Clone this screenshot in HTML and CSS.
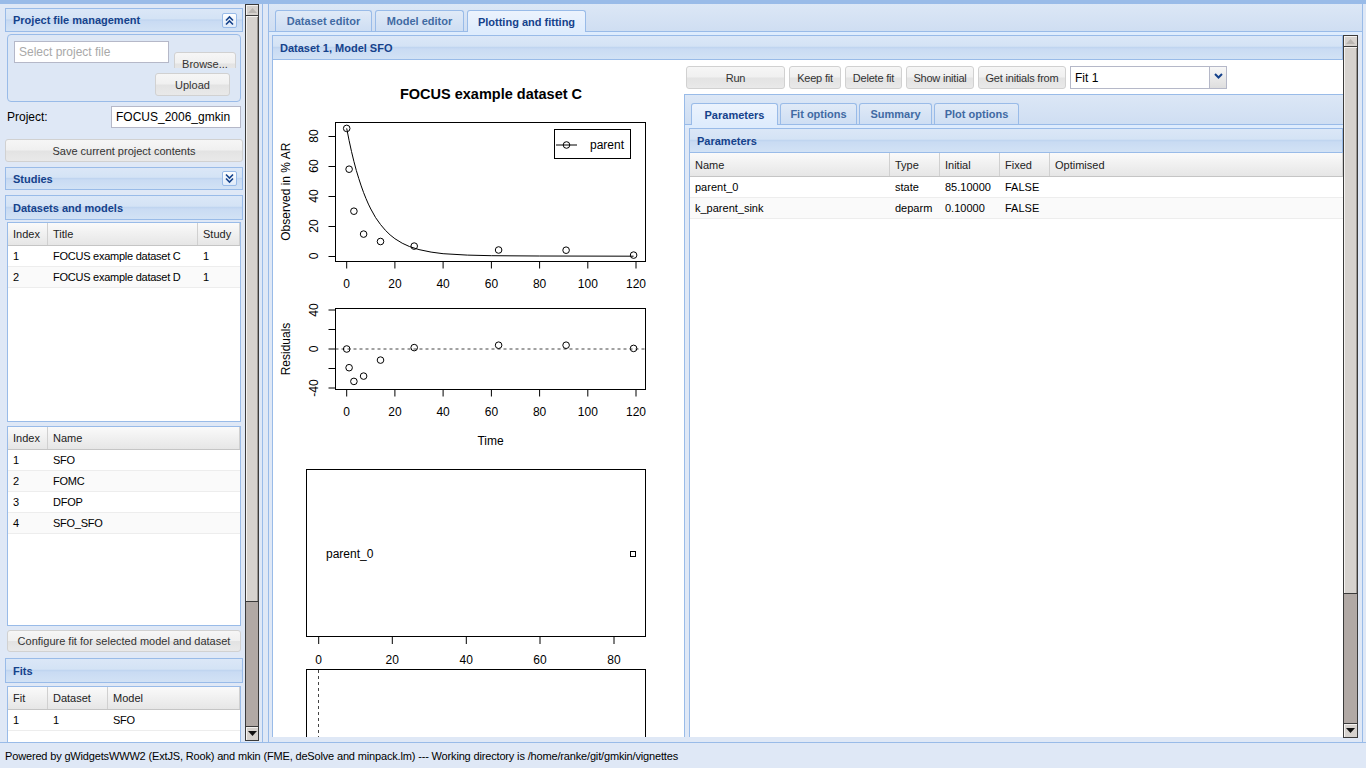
FILE: index.html
```html
<!DOCTYPE html>
<html>
<head>
<meta charset="utf-8">
<title>gmkin</title>
<link rel="stylesheet" href="styles.css">
</head>
<body>
<div class="app">
  <div class="topline"></div>
  <div class="main">
    <aside class="west">
      <div class="west-col">
        <div class="phead h24">
          <span>Project file management</span>
          <span class="tool"><svg width="11" height="11" viewBox="0 0 11 11"><path class="chev" d="M2 5.5L5.5 2L9 5.5M2 9.5L5.5 6L9 9.5"/></svg></span>
        </div>
        <div class="fieldset">
          <div class="fs-row">
            <input class="field f-file" type="text" placeholder="Select project file">
            <div class="browse-clip"><div class="btn browse">Browse...</div></div>
          </div>
          <div class="btn upload">Upload</div>
        </div>
        <div class="proj-row">
          <span class="lbl">Project:</span>
          <input class="field f-proj" type="text" value="FOCUS_2006_gmkin">
        </div>
        <div class="btn save">Save current project contents</div>
        <div class="phead h23 studies">
          <span>Studies</span>
          <span class="tool"><svg width="11" height="11" viewBox="0 0 11 11"><path class="chev" d="M2 1.5L5.5 5L9 1.5M2 5.5L5.5 9L9 5.5"/></svg></span>
        </div>
        <div class="phead h25 dsm"><span>Datasets and models</span></div>
        <div class="grid g1">
          <div class="gh"><div class="c w40">Index</div><div class="c w150">Title</div><div class="c fx">Study</div></div>
          <div class="gr"><div class="c w40">1</div><div class="c w150">FOCUS example dataset C</div><div class="c fx">1</div></div>
          <div class="gr alt"><div class="c w40">2</div><div class="c w150">FOCUS example dataset D</div><div class="c fx">1</div></div>
        </div>
        <div class="grid g2">
          <div class="gh"><div class="c w40">Index</div><div class="c fx">Name</div></div>
          <div class="gr"><div class="c w40">1</div><div class="c fx">SFO</div></div>
          <div class="gr alt"><div class="c w40">2</div><div class="c fx">FOMC</div></div>
          <div class="gr"><div class="c w40">3</div><div class="c fx">DFOP</div></div>
          <div class="gr alt"><div class="c w40">4</div><div class="c fx">SFO_SFO</div></div>
        </div>
        <div class="btn conf">Configure fit for selected model and dataset</div>
        <div class="phead h25 fits"><span>Fits</span></div>
        <div class="grid g3">
          <div class="gh"><div class="c w40">Fit</div><div class="c w60">Dataset</div><div class="c fx">Model</div></div>
          <div class="gr"><div class="c w40">1</div><div class="c w60">1</div><div class="c fx">SFO</div></div>
        </div>
      </div>
      <div class="sb sb-left">
        <div class="sb-arrow up"><svg width="9" height="5" viewBox="0 0 9 5"><path d="M0 5L4.5 0L9 5Z" class="tri-off"/></svg></div>
        <div class="sb-thumb"></div>
        <div class="sb-track"></div>
        <div class="sb-arrow down"><svg width="9" height="5" viewBox="0 0 9 5"><path d="M0 0L4.5 5L9 0Z" class="tri-on"/></svg></div>
      </div>
    </aside>

    <section class="center">
      <div class="tabpanel">
        <div class="tabbar top">
          <div class="tab t1">Dataset editor</div>
          <div class="tab t2">Model editor</div>
          <div class="tab t3 active">Plotting and fitting</div>
        </div>
        <div class="tabstrip"></div>
        <div class="tabbody">
          <div class="dpanel">
            <div class="phead h25 dhead"><span>Dataset 1, Model SFO</span></div>
            <div class="dbody">
              <svg class="plot" width="411" height="680" viewBox="273 60 411 680">
                <text class="ptitle" x="491" y="99" text-anchor="middle">FOCUS example dataset C</text>
                <g class="ax">
                  <rect x="335.5" y="122.5" width="310" height="139"/>
                  <path d="M346.7 261.5V268.5M394.9 261.5V268.5M443.1 261.5V268.5M491.4 261.5V268.5M539.6 261.5V268.5M587.8 261.5V268.5M636 261.5V268.5"/>
                  <path d="M335.5 256.5H328.5M335.5 226.5H328.5M335.5 196.5H328.5M335.5 166.5H328.5M335.5 136.5H328.5"/>
                  <path d="M346.7 128.4L349.1 140.5L351.5 151.5L353.9 161.4L356.3 170.4L358.8 178.6L361.2 185.9L363.6 192.6L366 198.6L368.4 204.1L370.8 209L375.6 217.6L380.5 224.5L385.3 230.2L390.1 234.9L394.9 238.7L402.2 243.2L409.4 246.5L419 249.6L431.1 252.1L443.1 253.7L467.3 255.1L491.4 255.7L539.6 256L633.6 256.2"/>
                  <circle cx="346.7" cy="128.4" r="3.3"/>
                  <circle cx="349.1" cy="169.2" r="3.3"/>
                  <circle cx="353.9" cy="211.2" r="3.3"/>
                  <circle cx="363.6" cy="234.1" r="3.3"/>
                  <circle cx="380.5" cy="241.5" r="3.3"/>
                  <circle cx="414.2" cy="246.1" r="3.3"/>
                  <circle cx="498.6" cy="250" r="3.3"/>
                  <circle cx="566.1" cy="250.2" r="3.3"/>
                  <circle cx="633.6" cy="255.1" r="3.3"/>
                  <rect x="554.5" y="129.5" width="76" height="29"/>
                  <path d="M556 145H577"/>
                  <circle cx="566.5" cy="145" r="3.3"/>

                  <rect x="335.5" y="308.5" width="310" height="81"/>
                  <path class="dash" d="M335.5 349H645.5"/>
                  <path d="M346.7 389.5V396.5M394.9 389.5V396.5M443.1 389.5V396.5M491.4 389.5V396.5M539.6 389.5V396.5M587.8 389.5V396.5M636 389.5V396.5"/>
                  <path d="M335.5 310H328.5M335.5 329.5H328.5M335.5 349H328.5M335.5 368.5H328.5M335.5 388H328.5"/>
                  <circle cx="346.7" cy="349" r="3.3"/>
                  <circle cx="349.1" cy="367.7" r="3.3"/>
                  <circle cx="353.9" cy="381.4" r="3.3"/>
                  <circle cx="363.6" cy="376.1" r="3.3"/>
                  <circle cx="380.5" cy="360.1" r="3.3"/>
                  <circle cx="414.2" cy="347.6" r="3.3"/>
                  <circle cx="498.6" cy="345.2" r="3.3"/>
                  <circle cx="566.1" cy="345.2" r="3.3"/>
                  <circle cx="633.6" cy="348.4" r="3.3"/>

                  <rect x="306.5" y="469.5" width="339" height="167"/>
                  <rect x="630.5" y="551.5" width="5" height="5"/>
                  <path d="M318.7 636.5V644M392.3 636.5V644M466.3 636.5V644M540 636.5V644M614 636.5V644M318.7 636.5H614"/>
                  <rect x="306.5" y="669.5" width="339" height="200"/>
                  <path class="dash" d="M318.5 670V740"/>
                </g>
                <g class="pt">
                  <text x="590" y="149">parent</text>
                  <text x="346.7" y="287.5" text-anchor="middle">0</text>
                  <text x="394.9" y="287.5" text-anchor="middle">20</text>
                  <text x="443.1" y="287.5" text-anchor="middle">40</text>
                  <text x="491.4" y="287.5" text-anchor="middle">60</text>
                  <text x="539.6" y="287.5" text-anchor="middle">80</text>
                  <text x="587.8" y="287.5" text-anchor="middle">100</text>
                  <text x="636" y="287.5" text-anchor="middle">120</text>
                  <text transform="translate(318 256) rotate(-90)" text-anchor="middle">0</text>
                  <text transform="translate(318 226) rotate(-90)" text-anchor="middle">20</text>
                  <text transform="translate(318 196) rotate(-90)" text-anchor="middle">40</text>
                  <text transform="translate(318 166) rotate(-90)" text-anchor="middle">60</text>
                  <text transform="translate(318 136) rotate(-90)" text-anchor="middle">80</text>
                  <text transform="translate(290 191.7) rotate(-90)" text-anchor="middle">Observed in % AR</text>

                  <text x="346.7" y="415.7" text-anchor="middle">0</text>
                  <text x="394.9" y="415.7" text-anchor="middle">20</text>
                  <text x="443.1" y="415.7" text-anchor="middle">40</text>
                  <text x="491.4" y="415.7" text-anchor="middle">60</text>
                  <text x="539.6" y="415.7" text-anchor="middle">80</text>
                  <text x="587.8" y="415.7" text-anchor="middle">100</text>
                  <text x="636" y="415.7" text-anchor="middle">120</text>
                  <text transform="translate(318 310) rotate(-90)" text-anchor="middle">40</text>
                  <text transform="translate(318 349) rotate(-90)" text-anchor="middle">0</text>
                  <text transform="translate(318 388) rotate(-90)" text-anchor="middle">-40</text>
                  <text transform="translate(290 349) rotate(-90)" text-anchor="middle">Residuals</text>
                  <text x="490.5" y="445" text-anchor="middle">Time</text>

                  <text x="326" y="557.5">parent_0</text>
                  <text x="318.7" y="664" text-anchor="middle">0</text>
                  <text x="392.3" y="664" text-anchor="middle">20</text>
                  <text x="466.3" y="664" text-anchor="middle">40</text>
                  <text x="540" y="664" text-anchor="middle">60</text>
                  <text x="614" y="664" text-anchor="middle">80</text>
                </g>
              </svg>
              <div class="rcol">
                <div class="toolbar">
                  <div class="btn b-run">Run</div>
                  <div class="btn b-keep">Keep fit</div>
                  <div class="btn b-del">Delete fit</div>
                  <div class="btn b-show">Show initial</div>
                  <div class="btn b-get">Get initials from</div>
                  <div class="combo">
                    <input class="field f-combo" type="text" value="Fit 1">
                    <div class="trigger"><svg width="9" height="6" viewBox="0 0 9 6"><path class="chev2" d="M1 1L4.5 4.5L8 1"/></svg></div>
                  </div>
                </div>
                <div class="ipanel">
                  <div class="tabbar inner">
                    <div class="tab i1 active">Parameters</div>
                    <div class="tab i2">Fit options</div>
                    <div class="tab i3">Summary</div>
                    <div class="tab i4">Plot options</div>
                  </div>
                  <div class="tabstrip"></div>
                  <div class="ibody">
                    <div class="phead h25 parhead"><span>Parameters</span></div>
                    <div class="pgrid">
                      <div class="gh ph"><div class="c w200">Name</div><div class="c w50">Type</div><div class="c w60">Initial</div><div class="c w50">Fixed</div><div class="c fx">Optimised</div></div>
                      <div class="gr"><div class="c w200">parent_0</div><div class="c w50">state</div><div class="c w60">85.10000</div><div class="c w50">FALSE</div><div class="c fx"></div></div>
                      <div class="gr alt"><div class="c w200">k_parent_sink</div><div class="c w50">deparm</div><div class="c w60">0.10000</div><div class="c w50">FALSE</div><div class="c fx"></div></div>
                    </div>
                  </div>
                </div>
              </div>
            </div>
          </div>
          <div class="sb sb-right">
            <div class="sb-arrow up"><svg width="9" height="5" viewBox="0 0 9 5"><path d="M0 5L4.5 0L9 5Z" class="tri-off"/></svg></div>
            <div class="sb-thumb"></div>
            <div class="sb-track"></div>
            <div class="sb-arrow down"><svg width="9" height="5" viewBox="0 0 9 5"><path d="M0 0L4.5 5L9 0Z" class="tri-on"/></svg></div>
          </div>
        </div>
      </div>
    </section>
  </div>
  <footer class="status">Powered by gWidgetsWWW2 (ExtJS, Rook) and mkin (FME, deSolve and minpack.lm) --- Working directory is /home/ranke/git/gmkin/vignettes</footer>
</div>
</body>
</html>
```

FILE: styles.css
```css
* { box-sizing: border-box; }
html, body { margin: 0; padding: 0; }
body {
  width: 1366px; height: 768px; overflow: hidden;
  background: #dfe8f6;
  font-family: "Liberation Sans", Arial, Helvetica, sans-serif;
  font-size: 11px; color: #000;
}
.app { display: flex; flex-direction: column; width: 1366px; height: 768px; }
.topline { flex: none; height: 4px; background: #99bbe8; }
.main { flex: none; height: 738px; display: flex; }

/* ---------- west ---------- */
.west { flex: none; width: 263px; display: flex; align-items: flex-start; border-right: 1px solid #99bbe8; }
.west-col { flex: none; width: 238px; height: 738px; margin-left: 5px; padding-top: 4px; display: flex; flex-direction: column; overflow: hidden; }

.phead {
  flex: none; display: flex; align-items: center; justify-content: space-between;
  padding: 0 5px 0 7px; border: 1px solid #99bbe8;
  background: linear-gradient(#dbe7f7 0%, #d4e3f5 44%, #c0d5f0 50%, #c9dbf3 57%, #d2e2f5 100%);
  color: #15428b; font-weight: bold; font-size: 11px; white-space: nowrap;
}
.h23 { height: 23px; }
.h24 { height: 24px; }
.h25 { height: 25px; }
.tool {
  width: 15px; height: 15px; border: 1px solid #99bbe8; border-radius: 2px;
  background: linear-gradient(#fdfeff, #e0ebf9);
  display: flex; align-items: center; justify-content: center;
}
.tool svg { display: block; }
.chev { fill: none; stroke: #15428b; stroke-width: 1.6; }
.chev2 { fill: none; stroke: #15428b; stroke-width: 2; }

.fieldset {
  flex: none; height: 68px; margin: 2px 2px 0; padding: 6px 0 0 6px;
  border: 1px solid #99bbe8; border-radius: 4px; background: #dde7f5;
}
.fs-row { display: flex; align-items: flex-start; }
.field {
  height: 22px; margin: 0; padding: 0 4px; border: 1px solid #b5b8c8; background: #fff;
  font-family: "Liberation Sans", Arial, sans-serif; font-size: 12px; color: #000; outline: none;
}
.field::placeholder { color: #a9a9a9; }
.f-file { width: 155px; }
.browse-clip { margin: 11px 0 0 5px; height: 16px; overflow: hidden; }
.browse { width: 62px; height: 22px; }
.upload { width: 75px; height: 22px; margin: 5px 0 0 141px; }

.proj-row { flex: none; display: flex; align-items: center; height: 22px; margin-top: 4px; padding-left: 2px; }
.lbl { flex: 1; font-size: 12px; }
.f-proj { width: 130px; margin-right: 2px; }

.btn {
  flex: none; display: flex; align-items: center; justify-content: center;
  height: 23px; border: 1px solid #d1d1d1; border-radius: 3px;
  background: linear-gradient(#f6f6f6 0%, #f0f0f0 48%, #e3e3e3 52%, #e9e9e9 100%);
  color: #333; font-size: 11px; white-space: nowrap;
}
.save { margin-top: 11px; }
.studies { margin-top: 5px; }
.dsm { margin-top: 5px; }
.conf { height: 22px; margin: 4px 2px 0; }
.fits { margin-top: 6px; }

.grid { flex: none; margin: 0 2px; border: 1px solid #99bbe8; background: #fff; overflow: hidden; }
.grid .gr { letter-spacing: -0.25px; }
.g1 { margin-top: 2px; height: 200px; }
.g2 { margin-top: 4px; height: 200px; }
.g3 { margin-top: 3px; height: 70px; }
.gh {
  display: flex; height: 23px; color: #222;
  background: linear-gradient(#fafafa, #e6e6e6);
  border-bottom: 1px solid #c5c5c5;
}
.gh .c { border-right: 1px solid #d0d0d0; }
.gr { display: flex; height: 21px; border-bottom: 1px solid #ededed; }
.gr.alt { background: #fafafa; }
.c { display: flex; align-items: center; padding-left: 5px; white-space: nowrap; overflow: hidden; }
.w40 { flex: none; width: 40px; }
.w50 { flex: none; width: 50px; }
.w60 { flex: none; width: 60px; }
.w150 { flex: none; width: 150px; }
.w200 { flex: none; width: 200px; }
.fx { flex: 1; min-width: 0; }

/* ---------- scrollbars ---------- */
.sb { flex: none; width: 15px; border: 1px solid #3a3a3a; background: #b1a9a5; display: flex; flex-direction: column; }
.sb-left { width: 14px; height: 737px; margin-left: 2px; }
.sb-right { height: 703px; }
.sb-arrow { flex: none; display: flex; align-items: center; justify-content: center; background: #d6d2ce; }
.sb-arrow svg { display: block; }
.sb-arrow.up { height: 11px; border-bottom: 1px solid #3a3a3a; box-shadow: inset 1px 1px #f4f2f0; }
.sb-arrow.down { height: 14px; border-top: 1px solid #3a3a3a; box-shadow: inset 1px 1px #f4f2f0; }
.sb-left .sb-thumb { height: 586px; }
.sb-right .sb-thumb { height: 547px; }
.sb-thumb { flex: none; background: #d6d2ce; border-bottom: 1px solid #3a3a3a; box-shadow: inset 1px 1px #f4f2f0, inset -1px 0 #9a9590; }
.sb-track { flex: 1; }
.tri-off { fill: #b9b5b1; }
.tri-on { fill: #111; }

/* ---------- center ---------- */
.center { flex: none; width: 1103px; display: flex; }
.tabpanel {
  width: 1095px; margin-left: 5px;
  border-left: 1px solid #99bbe8; border-right: 1px solid #99bbe8;
  display: flex; flex-direction: column;
}
.tabbar {
  flex: none; display: flex; align-items: flex-end; padding-left: 6px;
  background: linear-gradient(#dce7f6, #cfdef2);
}
.tabbar.top { height: 27px; gap: 3px; }
.tabbar.inner { height: 29px; gap: 2px; }
.tab {
  flex: none; height: 21px; display: flex; align-items: center; justify-content: center;
  border: 1px solid #99bbe8; border-bottom: none; border-radius: 3px 3px 0 0;
  background: linear-gradient(#e0eaf7, #cedef3);
  color: #416aa3; font-weight: bold; font-size: 11px; white-space: nowrap;
}
.tab.active {
  position: relative; z-index: 1; height: 22px; margin-bottom: -1px;
  background: linear-gradient(#ecf3fd, #deecfd); color: #15428b;
}
.t1 { width: 97px; }
.t2 { width: 89px; }
.t3 { width: 119px; }
.i1 { width: 87px; }
.i2 { width: 77px; }
.i3 { width: 73px; }
.i4 { width: 85px; }
.tabstrip { flex: none; height: 4px; border-top: 1px solid #99bbe8; background: #deecfd; }

.tabbody { flex: 1; min-height: 0; display: flex; align-items: flex-start; padding: 0 4px 0 3px; }
.dpanel { flex: none; width: 1071px; height: 702px; display: flex; flex-direction: column; }
.dhead { padding-left: 7px; }
.dbody { flex: 1; min-height: 0; display: flex; background: #fff; border-left: 1px solid #99bbe8; overflow: hidden; }

.plot { flex: none; display: block; }
.ax { fill: none; stroke: #000; stroke-width: 1; }
.ax .dash { stroke: #444; stroke-dasharray: 3 3; }
.pt { font-family: "Liberation Sans", Arial, Helvetica, sans-serif; font-size: 12px; fill: #000; }
.ptitle { font-family: "Liberation Sans", Arial, Helvetica, sans-serif; font-size: 14.5px; font-weight: bold; fill: #000; }

.rcol { flex: 1; min-width: 0; display: flex; flex-direction: column; padding-top: 6px; overflow: hidden; }
.toolbar { flex: none; display: flex; gap: 4px; margin-left: 2px; height: 23px; }
.toolbar .btn { letter-spacing: -0.2px; }
.b-run { width: 99px; }
.b-keep { width: 52px; }
.b-del { width: 57px; }
.b-show { width: 68px; }
.b-get { width: 88px; }
.combo { display: flex; height: 23px; }
.f-combo { width: 140px; height: 23px; }
.trigger {
  width: 17px; height: 23px; border: 1px solid #b5b8c8; border-left: none;
  background: linear-gradient(#f7f7f7, #dedede);
  display: flex; align-items: flex-start; justify-content: center; padding-top: 6px;
}
.trigger svg { display: block; }

.ipanel {
  flex: 1; min-height: 0; margin-top: 5px;
  border-top: 1px solid #99bbe8; border-left: 1px solid #99bbe8;
  display: flex; flex-direction: column;
}
.ibody { flex: 1; min-height: 0; padding-left: 4px; display: flex; flex-direction: column; background: #dfe8f6; }
.parhead { padding-left: 7px; }
.pgrid { flex: 1; background: #fff; border-left: 1px solid #99bbe8; }
.gh.ph { height: 24px; }

/* ---------- status ---------- */
.status {
  flex: none; height: 26px; border-top: 1px solid #99bbe8; background: #dfe8f6;
  padding-left: 5px; display: flex; align-items: center; font-size: 11px; white-space: nowrap;
  letter-spacing: -0.16px;
}
```
